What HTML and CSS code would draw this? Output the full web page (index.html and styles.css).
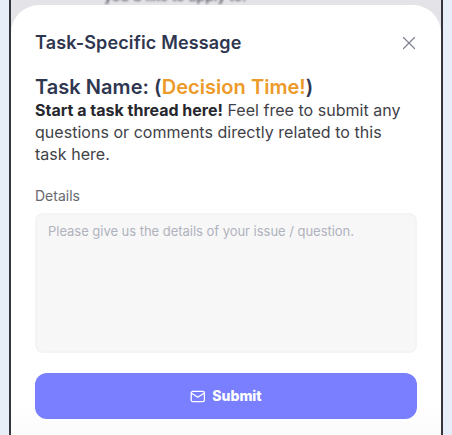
FILE: index.html
```html
<!DOCTYPE html>
<html lang="en">
<head>
<meta charset="utf-8">
<title>Task-Specific Message</title>
<link rel="stylesheet" href="styles.css">
</head>
<body>
<div class="phone">
  <div class="backdrop"><p class="backdrop-text">you'd like to apply to.</p></div>
  <section class="sheet">
    <header class="sheet-head">
      <h1 class="sheet-title">Task-Specific Message</h1>
      <svg class="close" width="16" height="16" viewBox="0 0 16 16" fill="none" aria-label="Close"><path d="M2.5 2.5l11 11M13.5 2.5l-11 11" stroke="#7b808c" stroke-width="1.2" stroke-linecap="round"/></svg>
    </header>
    <h2 class="task-name">Task Name: (<span class="task-accent">Decision Time!</span>)</h2>
    <p class="intro"><strong>Start a task thread here!</strong> Feel free to submit any questions or comments directly related to this task here.</p>
    <label class="field-label" for="details">Details</label>
    <textarea class="details" id="details" placeholder="Please give us the details of your issue / question."></textarea>
    <button class="submit" type="button">
      <svg width="16" height="15" viewBox="0 0 16 15" fill="none"><rect x="1.2" y="2.4" width="13.2" height="10.2" rx="1.6" stroke="#fff" stroke-width="1.3"/><path d="M1.6 4.2l6.2 4 6.2-4" stroke="#fff" stroke-width="1.3" stroke-linejoin="round"/></svg>
      <span>Submit</span>
    </button>
  </section>
</div>
</body>
</html>
```
FILE: styles.css
```css
* { box-sizing: border-box; }
html, body { margin: 0; height: 435px; overflow: hidden; }
body { background: #e8eef7; font-family: Inter, "Liberation Sans", sans-serif; }
.phone {
  position: relative;
  width: 434px;
  height: 435px;
  margin-left: 9px;
  border-left: 2px solid #35353b;
  border-right: 2px solid #35353b;
  background: #e4e4e8;
  overflow: hidden;
}
.backdrop { height: 5px; overflow: hidden; }
.backdrop-text {
  margin: -13px 0 0 93px;
  font-size: 14px;
  line-height: 17px;
  font-weight: 500;
  color: #55555f;
  filter: blur(0.8px);
}
.sheet {
  height: 430px;
  padding: 25px 24px 0;
  background: linear-gradient(#fff 93%, #fbfbfb);
  border-radius: 28px 28px 0 0;
  display: flex;
  flex-direction: column;
}
.sheet-head { display: flex; justify-content: space-between; align-items: center; height: 24px; }
.sheet-title { margin: 0; font-size: 18px; font-weight: 600; letter-spacing: 0.15px; color: #2f3650; line-height: 24px; position: relative; top: 1px; }
.close { position: relative; top: 1px; }
.task-name { margin: 21px 0 0; font-size: 20px; line-height: 24px; font-weight: 600; letter-spacing: 0.04px; color: #2f3650; }
.task-accent { color: #ec9a29; }
.intro { margin: 0; padding-right: 4px; font-size: 16px; line-height: 22px; letter-spacing: 0.03px; color: #3f4147; }
.intro strong { font-weight: 700; letter-spacing: 0; color: #26282e; }
.field-label { margin-top: 21px; font-size: 14px; line-height: 20px; color: #66686e; }
.details {
  display: block;
  margin-top: 7px;
  width: 100%;
  height: 140px;
  padding: 8px 11px;
  background: #f7f7f7;
  border: 2px solid #f4f4f5;
  border-radius: 8px;
  font: 400 13px/17px Inter, "Liberation Sans", sans-serif;
  letter-spacing: -0.03px;
  resize: none;
  outline: none;
}
.details::placeholder { color: #b0b2bd; opacity: 1; }
.submit {
  margin-top: 20px;
  width: 100%;
  height: 46px;
  border: 0;
  border-radius: 12px;
  background: #7a7fff;
  color: #fff;
  font: 800 14px/20px Inter, "Liberation Sans", sans-serif;
  display: flex;
  align-items: center;
  justify-content: center;
  gap: 6px;
}
```
